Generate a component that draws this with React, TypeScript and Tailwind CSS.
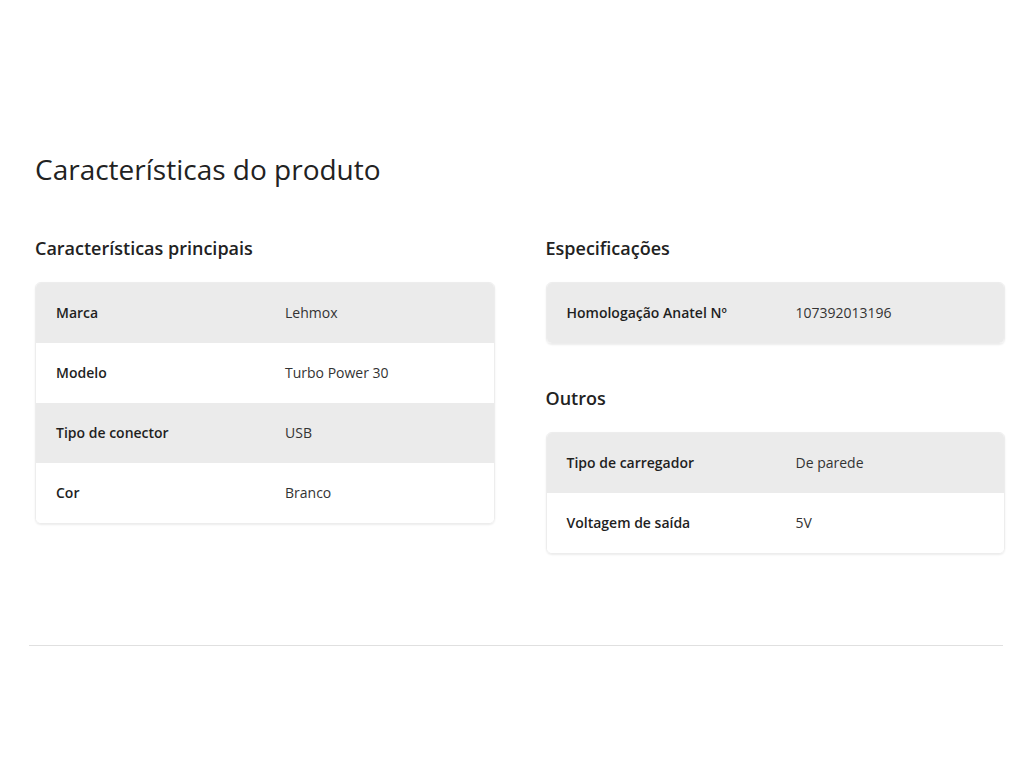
import React from "react";

type Row = [string, string];

function Table({ rows }: { rows: Row[] }) {
  return (
    <div className="rounded-md border border-[#ededed] shadow-[0_1px_2px_rgba(0,0,0,0.08)] overflow-hidden">
      {rows.map(([k, v], i) => (
        <div
          key={k}
          className={`flex items-center h-[60px] text-[14px] leading-[20px] ${i % 2 === 0 ? "bg-[#ebebeb]" : "bg-white"}`}
        >
          <div className="w-[249px] pl-[20px] font-semibold text-[#1f1f1f]">{k}</div>
          <div className="flex-1 text-[#333333]">{v}</div>
        </div>
      ))}
    </div>
  );
}

export default function App() {
  return (
    <div
      className="w-[1024px] h-[768px] bg-white text-[#1a1a1a]"
      style={{ fontFamily: '"Open Sans", "Lato", sans-serif' }}
    >
      <div className="pt-[152px] pl-[35px] pr-[19px]">
        <h2 className="text-[28px] leading-[34px] font-normal text-[#222]">Características do produto</h2>
        <div className="mt-[50px] grid grid-cols-2 gap-[51px]">
          <div>
            <h3 className="text-[18px] leading-[24px] font-semibold mb-[22px] text-[#222]">Características principais</h3>
            <Table
              rows={[
                ["Marca", "Lehmox"],
                ["Modelo", "Turbo Power 30"],
                ["Tipo de conector", "USB"],
                ["Cor", "Branco"],
              ]}
            />
          </div>
          <div>
            <h3 className="text-[18px] leading-[24px] font-semibold mb-[22px] text-[#222]">Especificações</h3>
            <Table rows={[["Homologação Anatel Nº", "107392013196"]]} />
            <h3 className="mt-[42px] text-[18px] leading-[24px] font-semibold mb-[22px] text-[#222]">Outros</h3>
            <Table
              rows={[
                ["Tipo de carregador", "De parede"],
                ["Voltagem de saída", "5V"],
              ]}
            />
          </div>
        </div>
      </div>
      <div className="mt-[91px] ml-[29px] mr-[21px] border-t border-[#e0e0e0]" />
    </div>
  );
}
